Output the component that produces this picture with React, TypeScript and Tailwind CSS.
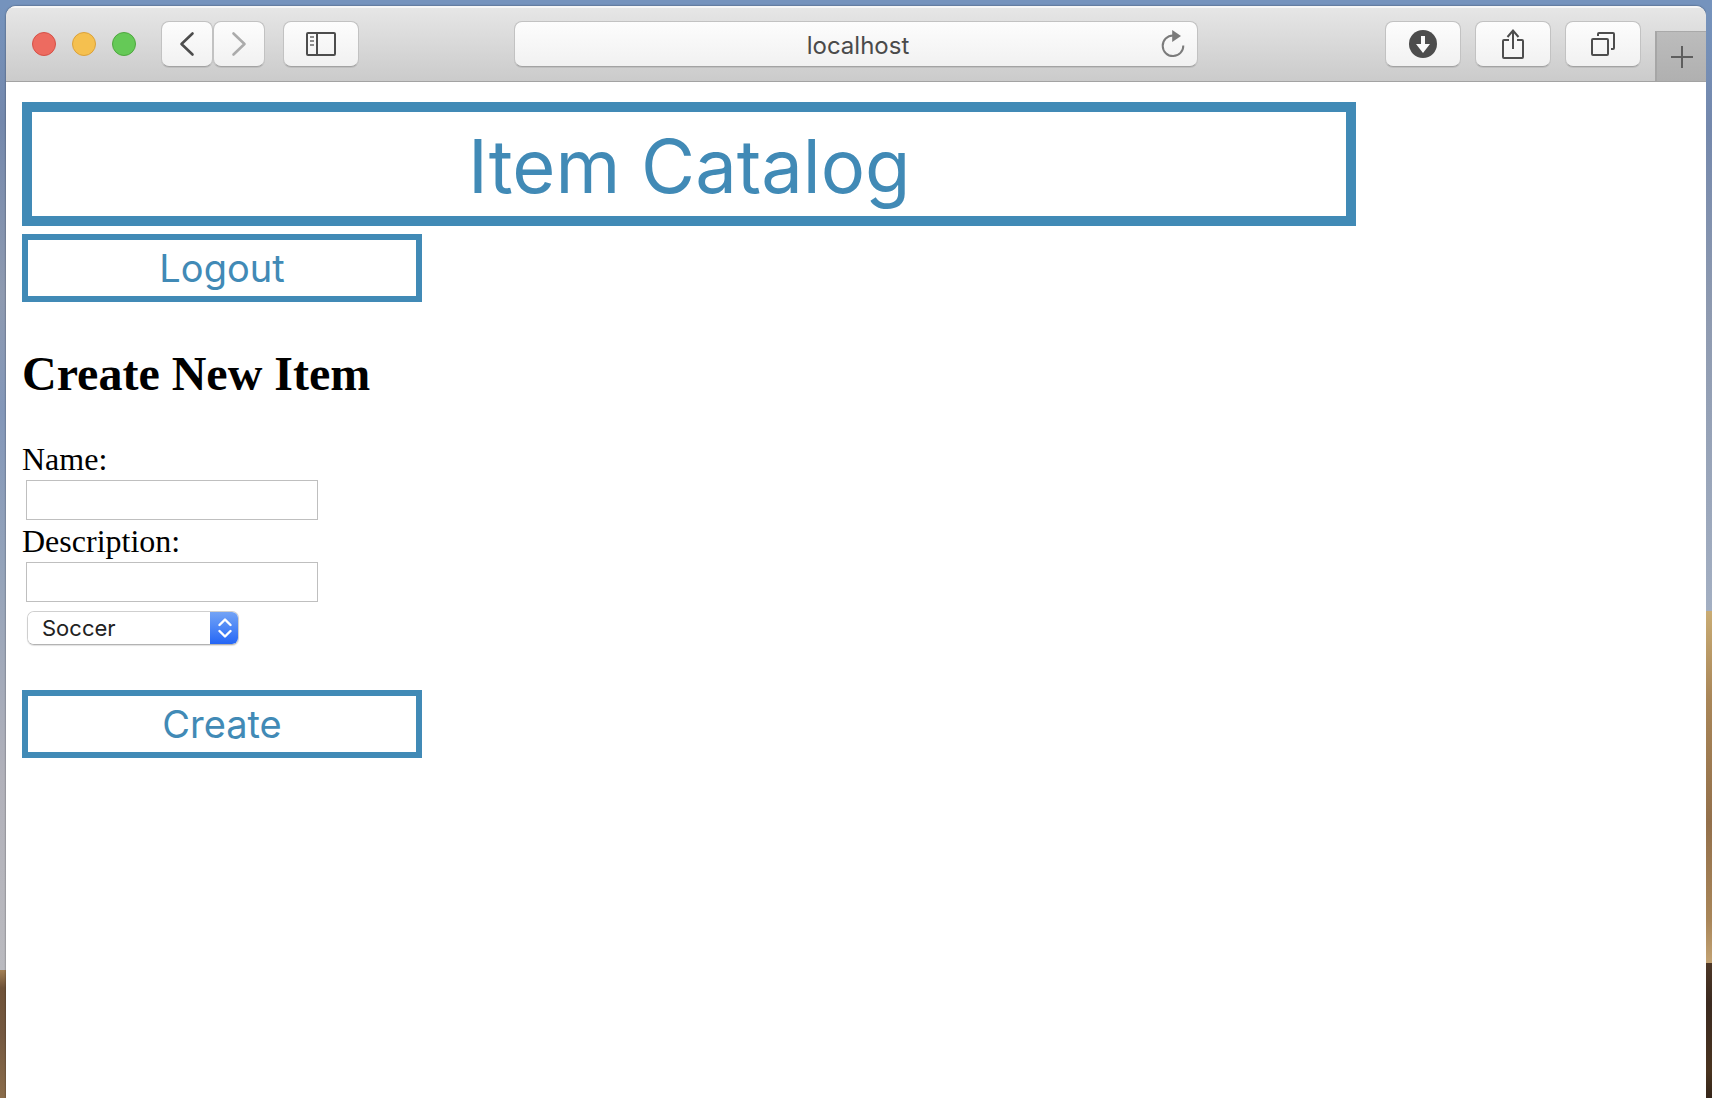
import type { ReactNode } from "react";

const toolButton =
  "flex h-[46px] shrink-0 items-center justify-center rounded-[8px] border border-[#c2c2c2] border-b-[#a3a3a3] bg-linear-to-b from-[#fdfdfd] to-[#f1f1f1] shadow-[0_1px_0_rgba(0,0,0,0.08)]";

const outlined =
  "block w-[400px] border-[6px] border-[#418ab6] bg-white text-center font-['Inter',sans-serif] text-[38px] leading-[56px] text-[#418ab6]";

const field = "my-[3px] ml-1 block h-10 w-[292px] border border-[#bfbfbf] bg-white px-1 text-[22px]";

function ToolButton({ label, size, children }: { label: string; size: string; children: ReactNode }) {
  return (
    <button type="button" aria-label={label} className={`${toolButton} ${size}`}>
      {children}
    </button>
  );
}

function Toolbar() {
  return (
    <header className="flex h-[76px] items-start border-t-2 border-b border-t-[#f6f6f6] border-b-[#a3a3a3] bg-linear-to-b from-[#e6e6e6] to-[#cbcbcb] pt-[13px] pl-[26px]">
      <div className="flex h-[46px] shrink-0 items-center gap-4">
        <button type="button" aria-label="Close" className="size-6 rounded-full border border-[#d55147] bg-[#ed6b60]" />
        <button type="button" aria-label="Minimize" className="size-6 rounded-full border border-[#dba13a] bg-[#f5c04f]" />
        <button type="button" aria-label="Zoom" className="size-6 rounded-full border border-[#4fa73f] bg-[#65c957]" />
      </div>
      <nav className="ml-[25px] flex shrink-0">
        <ToolButton label="Back" size="w-[52px]">
          <svg width="16" height="26" viewBox="0 0 16 26" fill="none" stroke="#4d4d4d" strokeWidth="2.6" strokeLinecap="round" strokeLinejoin="round">
            <path d="M13.500 2.500L2.500 13L13.500 23.500" />
          </svg>
        </ToolButton>
        <ToolButton label="Forward" size="w-[52px]">
          <svg width="16" height="26" viewBox="0 0 16 26" fill="none" stroke="#ababab" strokeWidth="2.6" strokeLinecap="round" strokeLinejoin="round">
            <path d="M2.500 2.500L13.500 13L2.500 23.500" />
          </svg>
        </ToolButton>
      </nav>
      <div className="ml-[18px] flex">
        <ToolButton label="Show sidebar" size="w-[76px]">
          <svg width="30" height="24" viewBox="0 0 30 24" fill="none" stroke="#4d4d4d" strokeWidth="2">
            <rect x="1" y="1" width="28" height="22" rx="1" />
            <path d="M11 1V23" />
            <path d="M4 5H8M4 9H8M4 13H8" stroke="#8c8c8c" />
          </svg>
        </ToolButton>
      </div>
      <div className={`${toolButton} relative mr-[187px] ml-[155px] min-w-0 flex-1`}>
        <input
          aria-label="Address"
          defaultValue="localhost"
          className="h-full w-full bg-transparent pt-0.5 pl-1 text-center font-['Inter',sans-serif] text-[24px] text-[#4a4a4a] outline-none"
        />
        <button type="button" aria-label="Reload" className="absolute right-3 flex">
          <svg width="24" height="28" viewBox="0 0 24 28" fill="none">
            <path d="M12 5.500A10.300 10.300 0 1 0 22.300 15.500" stroke="#7b7b7b" strokeWidth="2" />
            <path d="M11.200 0L20 6L11.200 12Z" fill="#7b7b7b" />
          </svg>
        </button>
      </div>
      <div className="flex shrink-0 gap-3.5">
        <ToolButton label="Downloads" size="w-[76px]">
          <svg width="28" height="28" viewBox="0 0 28 28">
            <circle cx="14" cy="14" r="14" fill="#4d4d4d" />
            <path d="M12 6H16V14H21L14 23L7 14H12Z" fill="#fafafa" />
          </svg>
        </ToolButton>
        <ToolButton label="Share" size="w-[76px]">
          <svg width="24" height="32" viewBox="0 0 24 32" fill="none" stroke="#4d4d4d" strokeWidth="2">
            <path d="M8 12H3Q2 12 2 13V29Q2 30 3 30H21Q22 30 22 29V13Q22 12 21 12H16" />
            <path d="M12 21V3M6.500 9L12 2.500L17.500 9" />
          </svg>
        </ToolButton>
        <ToolButton label="Show all tabs" size="w-[76px]">
          <svg width="24" height="24" viewBox="0 0 24 24" fill="none" stroke="#4d4d4d" strokeWidth="2">
            <rect x="1" y="7" width="16" height="16" rx="1" />
            <path d="M7 4V2Q7 1 8 1H22Q23 1 23 2V16Q23 17 22 17H20" />
          </svg>
        </ToolButton>
      </div>
      <button
        type="button"
        aria-label="New tab"
        className="ml-3.5 flex h-[50px] w-[51px] shrink-0 items-center justify-center self-end border-t border-l-2 border-t-[#a9a9a9] border-l-[#a6a6a6] bg-linear-to-b from-[#bcbcbc] to-[#b0b0b0]"
      >
        <svg width="22" height="22" viewBox="0 0 22 22" stroke="#5e5e5e" strokeWidth="2">
          <path d="M11 0V22M0 11H22" />
        </svg>
      </button>
    </header>
  );
}

function SportSelect() {
  return (
    <div className="relative mt-[9px] ml-[5px] flex h-[34px] w-[212px] overflow-hidden rounded-[7px] border border-[#cfcfcf] border-b-[#b3b3b3] shadow-[0_1px_1px_rgba(0,0,0,0.12)]">
      <select
        aria-label="Category"
        defaultValue="Soccer"
        className="w-full appearance-none bg-white pl-3.5 font-['Inter',sans-serif] text-[22px] leading-8 text-[#222222] outline-none"
      >
        <option>Soccer</option>
      </select>
      <span className="pointer-events-none absolute -inset-y-px -right-px flex w-[29px] items-center justify-center bg-linear-to-b from-[#76a5f5] to-[#2263f5]">
        <svg width="14" height="20" viewBox="0 0 14 20" fill="none" stroke="#ffffff" strokeWidth="2.4" strokeLinecap="round" strokeLinejoin="round">
          <path d="M1.500 7L7 1.500L12.500 7M1.500 13L7 18.500L12.500 13" />
        </svg>
      </span>
    </div>
  );
}

export default function App() {
  return (
    <div className="flex min-h-screen flex-col bg-[#7593bd]">
      <div className="h-1.5" />
      <div className="flex flex-1">
        <div className="flex w-1.5 flex-col">
          <div className="flex-[964] bg-[linear-gradient(#7593bd,#7488ac_12%,#8e9ab0_30%,#8397b9_42%,#94a3ba_58%,#b1b1ba_80%,#bababf)]" />
          <div className="flex-[128] bg-[linear-gradient(#a38054,#6f5238_14%,#745840_50%,#8a6c4a)]" />
        </div>
        <div className="flex min-w-0 flex-1 flex-col overflow-hidden rounded-t-[10px] bg-white shadow-[0_0_2px_rgba(0,0,0,0.55)]">
          <Toolbar />
          <main className="flex-1 px-4 pt-5 pb-8 font-['Liberation_Serif',serif] text-black">
            <h1 className="w-4/5 border-[10px] border-[#418ab6] pt-1 text-center font-['Inter',sans-serif] text-[74px] leading-[100px] text-[#418ab6]">
              Item Catalog
            </h1>
            <a href="#logout" className={`${outlined} mt-2`}>
              Logout
            </a>
            <h2 className="mt-11 text-[48px] leading-[56px] font-bold">Create New Item</h2>
            <form className="mt-[39px] text-[32px] leading-9" onSubmit={(e) => e.preventDefault()}>
              <label htmlFor="name" className="block">
                Name:
              </label>
              <input id="name" type="text" className={field} />
              <label htmlFor="description" className="block">
                Description:
              </label>
              <input id="description" type="text" className={field} />
              <SportSelect />
              <button type="submit" className={`${outlined} mt-[45px]`}>
                Create
              </button>
            </form>
          </main>
        </div>
        <div className="flex w-1.5 flex-col">
          <div className="flex-[605] bg-[linear-gradient(#7593bd,#7488ac_20%,#8e9ab0_50%,#a3afc2)]" />
          <div className="flex-[352] bg-[linear-gradient(#c9ac74,#a98658_25%,#93704b_60%,#a98659_88%,#c2a273)]" />
          <div className="flex-[135] bg-[linear-gradient(#4d3726,#3b2a20_30%,#49331f_80%,#35261a)]" />
        </div>
      </div>
    </div>
  );
}
